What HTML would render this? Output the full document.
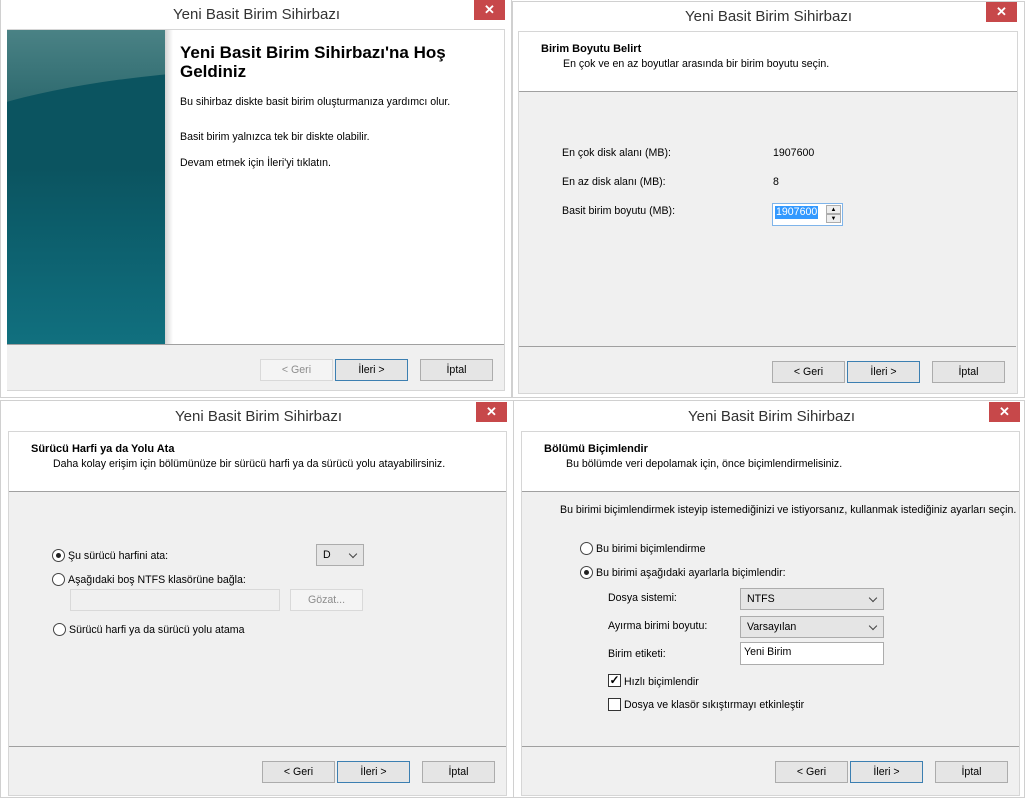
<!DOCTYPE html>
<html><head><meta charset="utf-8"><style>
*{margin:0;padding:0;box-sizing:border-box}
body{width:1025px;height:798px;background:#fff;position:relative;overflow:hidden;font-family:"Liberation Sans",Tahoma,sans-serif;font-size:10.6px;color:#000}
div,span{position:absolute}
.t{white-space:nowrap;line-height:13px}
.ttl{font-size:15px;color:#333;white-space:nowrap;line-height:18px}
.x{background:#c7484a;color:#fff;width:31px;height:20px;text-align:center;font-size:13px;line-height:20px;font-weight:bold}
.btn{width:73px;height:22px;background:#e5e5e5;border:1px solid #acacac;text-align:center;line-height:20px;font-size:10.6px}
.btn.d{background:#f4f4f4;border-color:#d9d9d9;color:#8d8d8d}
.btn.f{border-color:#3c7fb1;background:#e5e5e5}
.rad{width:13px;height:13px;border:1px solid #444;border-radius:50%;background:#fff}
.rad.on::after{content:"";position:absolute;left:3px;top:3px;width:5px;height:5px;border-radius:50%;background:#222}
.cmb{background:#e5e5e5;border:1px solid #acacac;height:22px;line-height:20px;padding-left:6px}
.cmb::after{content:"";position:absolute;right:7px;top:6px;width:5px;height:5px;border-right:1.5px solid #444;border-bottom:1.5px solid #444;transform:rotate(45deg)}
.b{font-weight:bold;font-size:11px}
</style></head><body>

<!-- Window 1 -->
<div style="left:0;top:0;width:512px;height:398px;border:1px solid #d0d0d0;border-top:none;background:#fff"></div>
<div class="ttl" style="left:173px;top:6px">Yeni Basit Birim Sihirbazı</div>
<div class="x" style="left:474px;top:0">✕</div>
<div style="left:7px;top:29px;width:498px;height:362px;border:1px solid #d6d6d6;background:#fff"></div>
<div style="left:7px;top:30px;width:158px;height:314px;background:linear-gradient(180deg,#4a8285,#2f6b70 70px);overflow:hidden">
  <div style="left:-100px;top:38px;width:800px;height:200px;border-radius:50%;background:#0b5460"></div>
  <div style="left:0;top:138px;width:158px;height:176px;background:linear-gradient(180deg,#0b5460 0%,#0d6270 50%,#11707f 100%)"></div>
</div>
<div style="left:165px;top:30px;width:8px;height:314px;background:linear-gradient(90deg,#d4d4d4,#fff)"></div>
<div class="t" style="left:180px;top:43px;font-size:17px;line-height:19px;font-weight:bold">Yeni Basit Birim Sihirbazı'na Hoş<br>Geldiniz</div>
<div class="t" style="left:180px;top:96px">Bu sihirbaz diskte basit birim oluşturmanıza yardımcı olur.</div>
<div class="t" style="left:180px;top:131px">Basit birim yalnızca tek bir diskte olabilir.</div>
<div class="t" style="left:180px;top:157px">Devam etmek için İleri'yi tıklatın.</div>
<div style="left:7px;top:344px;width:497px;height:1px;background:#a0a0a0"></div>
<div style="left:7px;top:345px;width:497px;height:45px;background:#f0f0f0"></div>
<div class="btn d" style="left:260px;top:359px">&lt; Geri</div>
<div class="btn f" style="left:335px;top:359px">İleri &gt;</div>
<div class="btn" style="left:420px;top:359px">İptal</div>

<!-- Window 2 -->
<div style="left:512px;top:1px;width:513px;height:397px;border:1px solid #d0d0d0;background:#fff"></div>
<div class="ttl" style="left:685px;top:8px">Yeni Basit Birim Sihirbazı</div>
<div class="x" style="left:986px;top:2px">✕</div>
<div style="left:518px;top:31px;width:500px;height:363px;border:1px solid #d6d6d6;background:#f0f0f0"></div>
<div style="left:519px;top:32px;width:498px;height:59px;background:#fff"></div>
<div style="left:519px;top:91px;width:498px;height:1px;background:#a0a0a0"></div>
<div class="t b" style="left:541px;top:43px">Birim Boyutu Belirt</div>
<div class="t" style="left:563px;top:58px">En çok ve en az boyutlar arasında bir birim boyutu seçin.</div>
<div class="t" style="left:562px;top:147px">En çok disk alanı (MB):</div>
<div class="t" style="left:773px;top:147px">1907600</div>
<div class="t" style="left:562px;top:176px">En az disk alanı (MB):</div>
<div class="t" style="left:773px;top:176px">8</div>
<div class="t" style="left:562px;top:205px">Basit birim boyutu (MB):</div>
<div style="left:772px;top:203px;width:71px;height:23px;border:1px solid #7eb4ea;background:#fff"></div>
<div class="t" style="left:775px;top:206px;background:#3399ff;color:#fff;padding:0 1px">1907600</div>
<div style="left:826px;top:205px;width:15px;height:9px;border:1px solid #acacac;background:#eee;font-size:6px;text-align:center;line-height:8px">▲</div>
<div style="left:826px;top:214px;width:15px;height:9px;border:1px solid #acacac;background:#eee;font-size:6px;text-align:center;line-height:8px">▼</div>
<div style="left:519px;top:346px;width:497px;height:1px;background:#a0a0a0"></div>
<div class="btn" style="left:772px;top:361px">&lt; Geri</div>
<div class="btn f" style="left:847px;top:361px">İleri &gt;</div>
<div class="btn" style="left:932px;top:361px">İptal</div>

<!-- Window 3 -->
<div style="left:0;top:400px;width:515px;height:398px;border:1px solid #d0d0d0;background:#fff"></div>
<div class="ttl" style="left:175px;top:408px">Yeni Basit Birim Sihirbazı</div>
<div class="x" style="left:476px;top:402px">✕</div>
<div style="left:8px;top:431px;width:499px;height:365px;border:1px solid #d6d6d6;background:#f0f0f0"></div>
<div style="left:9px;top:432px;width:497px;height:59px;background:#fff"></div>
<div style="left:9px;top:491px;width:497px;height:1px;background:#a0a0a0"></div>
<div class="t b" style="left:31px;top:443px">Sürücü Harfi ya da Yolu Ata</div>
<div class="t" style="left:53px;top:458px">Daha kolay erişim için bölümünüze bir sürücü harfi ya da sürücü yolu atayabilirsiniz.</div>
<div class="rad on" style="left:52px;top:549px"></div>
<div class="t" style="left:68px;top:550px">Şu sürücü harfini ata:</div>
<div class="cmb" style="left:316px;top:544px;width:48px">D</div>
<div class="rad" style="left:52px;top:573px"></div>
<div class="t" style="left:68px;top:574px">Aşağıdaki boş NTFS klasörüne bağla:</div>
<div style="left:70px;top:589px;width:210px;height:22px;border:1px solid #d9d9d9;background:#f0f0f0"></div>
<div class="btn d" style="left:290px;top:589px">Gözat...</div>
<div class="rad" style="left:53px;top:623px"></div>
<div class="t" style="left:69px;top:624px">Sürücü harfi ya da sürücü yolu atama</div>
<div style="left:9px;top:746px;width:497px;height:1px;background:#a0a0a0"></div>
<div class="btn" style="left:262px;top:761px">&lt; Geri</div>
<div class="btn f" style="left:337px;top:761px">İleri &gt;</div>
<div class="btn" style="left:422px;top:761px">İptal</div>

<!-- Window 4 -->
<div style="left:513px;top:400px;width:512px;height:398px;border:1px solid #d0d0d0;background:#fff"></div>
<div class="ttl" style="left:688px;top:408px">Yeni Basit Birim Sihirbazı</div>
<div class="x" style="left:989px;top:402px">✕</div>
<div style="left:521px;top:431px;width:499px;height:365px;border:1px solid #d6d6d6;background:#f0f0f0"></div>
<div style="left:522px;top:432px;width:497px;height:59px;background:#fff"></div>
<div style="left:522px;top:491px;width:497px;height:1px;background:#a0a0a0"></div>
<div class="t b" style="left:544px;top:443px">Bölümü Biçimlendir</div>
<div class="t" style="left:566px;top:458px">Bu bölümde veri depolamak için, önce biçimlendirmelisiniz.</div>
<div class="t" style="left:560px;top:504px">Bu birimi biçimlendirmek isteyip istemediğinizi ve istiyorsanız, kullanmak istediğiniz ayarları seçin.</div>
<div class="rad" style="left:580px;top:542px"></div>
<div class="t" style="left:596px;top:543px">Bu birimi biçimlendirme</div>
<div class="rad on" style="left:580px;top:566px"></div>
<div class="t" style="left:596px;top:567px">Bu birimi aşağıdaki ayarlarla biçimlendir:</div>
<div class="t" style="left:608px;top:592px">Dosya sistemi:</div>
<div class="cmb" style="left:740px;top:588px;width:144px">NTFS</div>
<div class="t" style="left:608px;top:620px">Ayırma birimi boyutu:</div>
<div class="cmb" style="left:740px;top:616px;width:144px">Varsayılan</div>
<div class="t" style="left:608px;top:648px">Birim etiketi:</div>
<div class="t" style="left:740px;top:642px;width:144px;height:23px;border:1px solid #acacac;background:#fff;padding:3px 0 0 3px">Yeni Birim</div>
<div style="left:608px;top:674px;width:13px;height:13px;border:1px solid #333;background:#fff;font-size:12px;line-height:11px;text-align:center;font-weight:bold">✓</div>
<div class="t" style="left:624px;top:676px">Hızlı biçimlendir</div>
<div style="left:608px;top:698px;width:13px;height:13px;border:1px solid #333;background:#fff"></div>
<div class="t" style="left:624px;top:699px">Dosya ve klasör sıkıştırmayı etkinleştir</div>
<div style="left:522px;top:746px;width:497px;height:1px;background:#a0a0a0"></div>
<div class="btn" style="left:775px;top:761px">&lt; Geri</div>
<div class="btn f" style="left:850px;top:761px">İleri &gt;</div>
<div class="btn" style="left:935px;top:761px">İptal</div>
</body></html>
